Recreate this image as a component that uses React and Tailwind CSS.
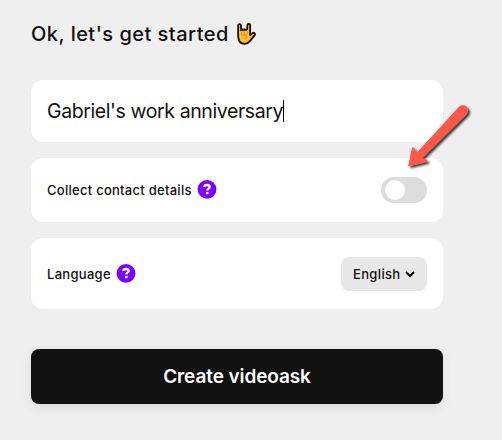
import React, { useState } from 'react';

const HelpBadge = () => (
  <svg className="ml-[5px] h-5 w-5 shrink-0 -translate-y-px" viewBox="0 0 20 20" fill="none">
    <circle cx="10" cy="10.3" r="9.4" fill="#7D00FE" />
    <path d="M7.3 8C7.4 6.6 8.5 6 10 6c1.7 0 2.7.8 2.7 2 0 1.6-2.5 1.7-2.5 3.6" stroke="#fff" strokeWidth="2.3" />
    <rect x="9" y="12.9" width="2.5" height="2.3" fill="#fff" />
  </svg>
);

const HandEmoji = () => (
  <svg className="ml-1.5 h-6 w-[22px]" viewBox="0 0 22 24" fill="none">
    <path
      d="M3.2 3.2C3.2 1.8 5.8 1.8 5.9 3.3L6.2 8.2 7.2 7.3 8.5 7.9 9.5 7.2 11 7.9 12.1 7.2 12.4 3C12.5 1.4 15.2 1.5 15.2 3.1L15.1 13 17.7 11.1C19.1 10.2 20.8 11.8 19.7 13.1L14.5 19.6C12.5 22.5 6.5 22.6 4.6 19.6 3 17 3.1 14 3.1 11Z"
      fill="#FFBE2B"
      stroke="#15120D"
      strokeWidth="1.8"
      strokeLinejoin="round"
    />
    <path d="M6.3 9V13M9.2 9V13M12.2 9V12.4M6.3 13H12.1M9.5 13.2C11.8 13.2 12.5 14 12.1 15L10.3 17.2" stroke="#E08F1E" strokeWidth="0.8" />
  </svg>
);

const Arrow = () => (
  <svg className="pointer-events-none absolute left-[396px] top-[95px] h-[85px] w-[85px]" viewBox="396 95 85 85">
    <defs>
      <filter id="arrow-shadow" x="-20%" y="-20%" width="150%" height="150%">
        <feDropShadow dx="2" dy="2" stdDeviation="1.3" floodColor="#000" floodOpacity="0.75" />
      </filter>
    </defs>
    <path
      d="M408 166.5L411.9 148.2Q412.7 146.2 414.1 148.1L417 152.4 458.5 107.2C464 102.2 471.2 108 466.7 114.2L422.7 157.8 427.3 160.3Q428.4 161.4 426.6 162Z"
      fill="#FB5849"
      filter="url(#arrow-shadow)"
    />
  </svg>
);

const App = () => {
  const [collect, setCollect] = useState(false);

  return (
    <div className="relative h-[440px] w-[502px] overflow-hidden bg-[#efefef] pl-[31px] pt-5 font-['Inter',sans-serif] text-[#111]">
      <div className="flex h-7 items-center">
        <h1 className="whitespace-nowrap text-[20px] font-medium tracking-[0.48px]">Ok, let's get started</h1>
        <HandEmoji />
      </div>

      <div className="mt-8 flex w-[412px] flex-col gap-4">
        <div className="flex h-[61.5px] items-center rounded-xl bg-white px-4">
          <span className="whitespace-nowrap pt-px text-[19.5px] tracking-[-0.4px]">Gabriel's work anniversary</span>
          <span className="h-[22px] w-px bg-black" />
        </div>

        <div className="flex h-[64.5px] items-center rounded-xl bg-white px-4">
          <span className="whitespace-nowrap pt-0.5 text-[13px] font-medium tracking-[0.27px]">Collect contact details</span>
          <HelpBadge />
          <button
            onClick={() => setCollect(!collect)}
            className={`ml-auto flex h-[26px] w-[46px] items-center rounded-full px-1 ${
              collect ? 'justify-end bg-[#7D00FE]' : 'bg-[#dcdcdc]'
            }`}
          >
            <span className="h-5 w-5 rounded-full bg-white" />
          </button>
        </div>

        <div className="flex h-[71px] items-center rounded-xl bg-white px-4">
          <span className="whitespace-nowrap pt-0.5 text-[13px] font-medium tracking-[0.3px]">Language</span>
          <HelpBadge />
          <button className="ml-auto flex h-[34px] w-[86px] items-center rounded-lg bg-[#e8e8e8] pl-3 text-[13px] font-medium tracking-[0.35px]">
            <span className="pt-0.5">English</span>
            <svg className="ml-[3px] h-3 w-3" viewBox="0 0 12 12" fill="none">
              <path d="M2 4l4 4 4-4" stroke="#000" strokeWidth="2" />
            </svg>
          </button>
        </div>
      </div>

      <button className="mt-10 flex h-[55px] w-[412px] items-center justify-center rounded-lg bg-[#111] pt-px text-[19px] font-semibold tracking-[-0.1px] text-white shadow-[0_4px_12px_rgba(0,0,0,0.08)]">
        Create videoask
      </button>

      <Arrow />
    </div>
  );
};

export default App;
